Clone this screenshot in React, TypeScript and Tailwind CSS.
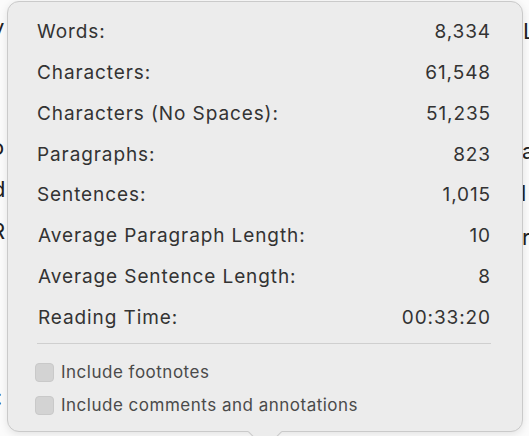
const stats = [
  { label: "Words:", value: "8,334" },
  { label: "Characters:", value: "61,548" },
  { label: "Characters (No Spaces):", value: "51,235" },
  { label: "Paragraphs:", value: "823" },
  { label: "Sentences:", value: "1,015" },
  { label: "Average Paragraph Length:", value: "10", shift: true },
  { label: "Average Sentence Length:", value: "8", shift: true },
  { label: "Reading Time:", value: "00:33:20", shift: true },
];

const options = ["Include footnotes", "Include comments and annotations"];

export default function App() {
  return (
    <div
      className="relative w-[529px] h-[436px] overflow-hidden bg-[#fbfbfb]"
      style={{ fontFamily: "Inter, 'Noto Sans', sans-serif" }}
    >
      {/* document text peeking out behind the popover */}
      <div className="flex justify-between h-full text-[22px] text-[#222] leading-none">
        <div className="flex flex-col w-[7px] overflow-hidden pt-[16px]">
          <span className="h-[120px] -ml-[8px]">v</span>
          <span className="h-[42px] -ml-[9px]">o</span>
          <span className="h-[42px] -ml-[8px]">d</span>
          <span className="h-[166px] -ml-[9px]">R</span>
          <span className="-ml-[4px] text-[#222]">:</span>
        </div>
        <div className="flex flex-col w-[6px] overflow-hidden pt-[20px] items-end">
          <span className="h-[120px] w-[14px] -mr-[8px]">L</span>
          <span className="h-[42px] w-[14px] -mr-[7px]">a</span>
          <span className="h-[44px] w-[14px] -mr-[6px]">l</span>
          <span className="w-[14px] -mr-[7px]">r</span>
        </div>
      </div>

      {/* popover */}
      <div className="absolute left-[7px] top-[1px] w-[516px] h-[431px] rounded-[12px] border border-[#cacaca] bg-[#ececec] shadow-[0_2px_8px_rgba(0,0,0,0.10)]">
        <div className="absolute left-1/2 -bottom-[13px] w-[24px] h-[24px] -translate-x-1/2 rotate-45 bg-[#ececec] border-r border-b border-[#cacaca]" />
        <div className="relative flex flex-col pl-[29px] pr-[31px] pt-[10px] text-[#333]">
          {stats.map((s) => (
            <div
              key={s.label}
              className="flex h-[40.8px] items-center justify-between text-[19px] tracking-[0.9px]"
            >
              <span className={s.shift ? "ml-[1px]" : ""}>{s.label}</span>
              <span>{s.value}</span>
            </div>
          ))}
          <div className="mt-[5px] h-px bg-[#cfcfcf]" />
          <div className="flex flex-col mt-[12px] text-[17px] tracking-[0.5px] text-[#4a4a4a]">
            {options.map((o) => (
              <div key={o} className="flex h-[33px] items-center gap-[7px] -ml-[2px]">
                <span className="w-[19px] h-[19px] rounded-[4px] bg-[#d3d3d3] border border-[#c9c9c9]" />
                <span>{o}</span>
              </div>
            ))}
          </div>
        </div>
      </div>
    </div>
  );
}
